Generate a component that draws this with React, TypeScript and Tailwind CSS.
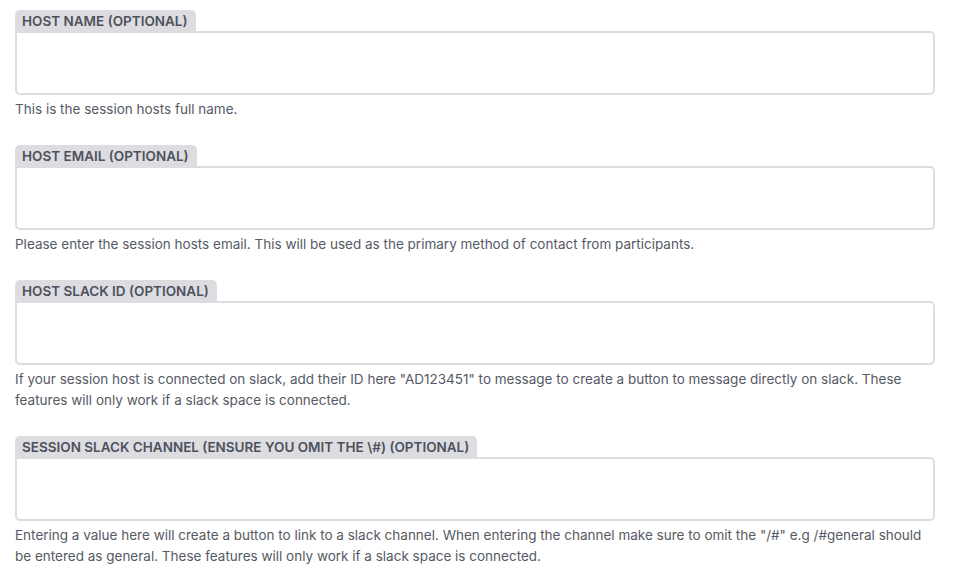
const fields = [
  {
    label: "Host Name (optional)",
    help: ["This is the session hosts full name."],
  },
  {
    label: "Host Email (optional)",
    help: [
      "Please enter the session hosts email. This will be used as the primary method of contact from participants.",
    ],
  },
  {
    label: "Host Slack ID (optional)",
    help: [
      'If your session host is connected on slack, add their ID here "AD123451" to message to create a button to message directly on slack. These',
      "features will only work if a slack space is connected.",
    ],
  },
  {
    label: "Session Slack Channel (ensure you omit the \\#) (optional)",
    help: [
      'Entering a value here will create a button to link to a slack channel. When entering the channel make sure to omit the "/#" e.g /#general should',
      "be entered as general. These features will only work if a slack space is connected.",
    ],
  },
];

function Field({ label, help }: { label: string; help: string[] }) {
  return (
    <div className="mb-[25px]">
      <div className="flex">
        <span className="h-[21px] rounded-t-[5px] bg-[#dcdce1] pl-[7px] pr-[8px] text-[13.5px] leading-[22px] font-semibold uppercase text-[#4d525c]">
          {label}
        </span>
      </div>
      <input
        type="text"
        className="block h-[64px] w-full rounded-[5px] rounded-tl-none border-2 border-[#dcdce1] bg-white outline-none"
      />
      <p className="mt-[4px] text-[13.5px] leading-[21px] text-[#555a64]">
        {help.map((line, i) => (
          <span key={i} className="block whitespace-nowrap">
            {line}
          </span>
        ))}
      </p>
    </div>
  );
}

export default function App() {
  return (
    <div
      className="min-h-screen w-[978px] bg-white pl-[15px] pr-[43px] pt-[10px]"
      style={{ fontFamily: "Inter, 'Liberation Sans', sans-serif" }}
    >
      {fields.map((f) => (
        <Field key={f.label} label={f.label} help={f.help} />
      ))}
    </div>
  );
}
